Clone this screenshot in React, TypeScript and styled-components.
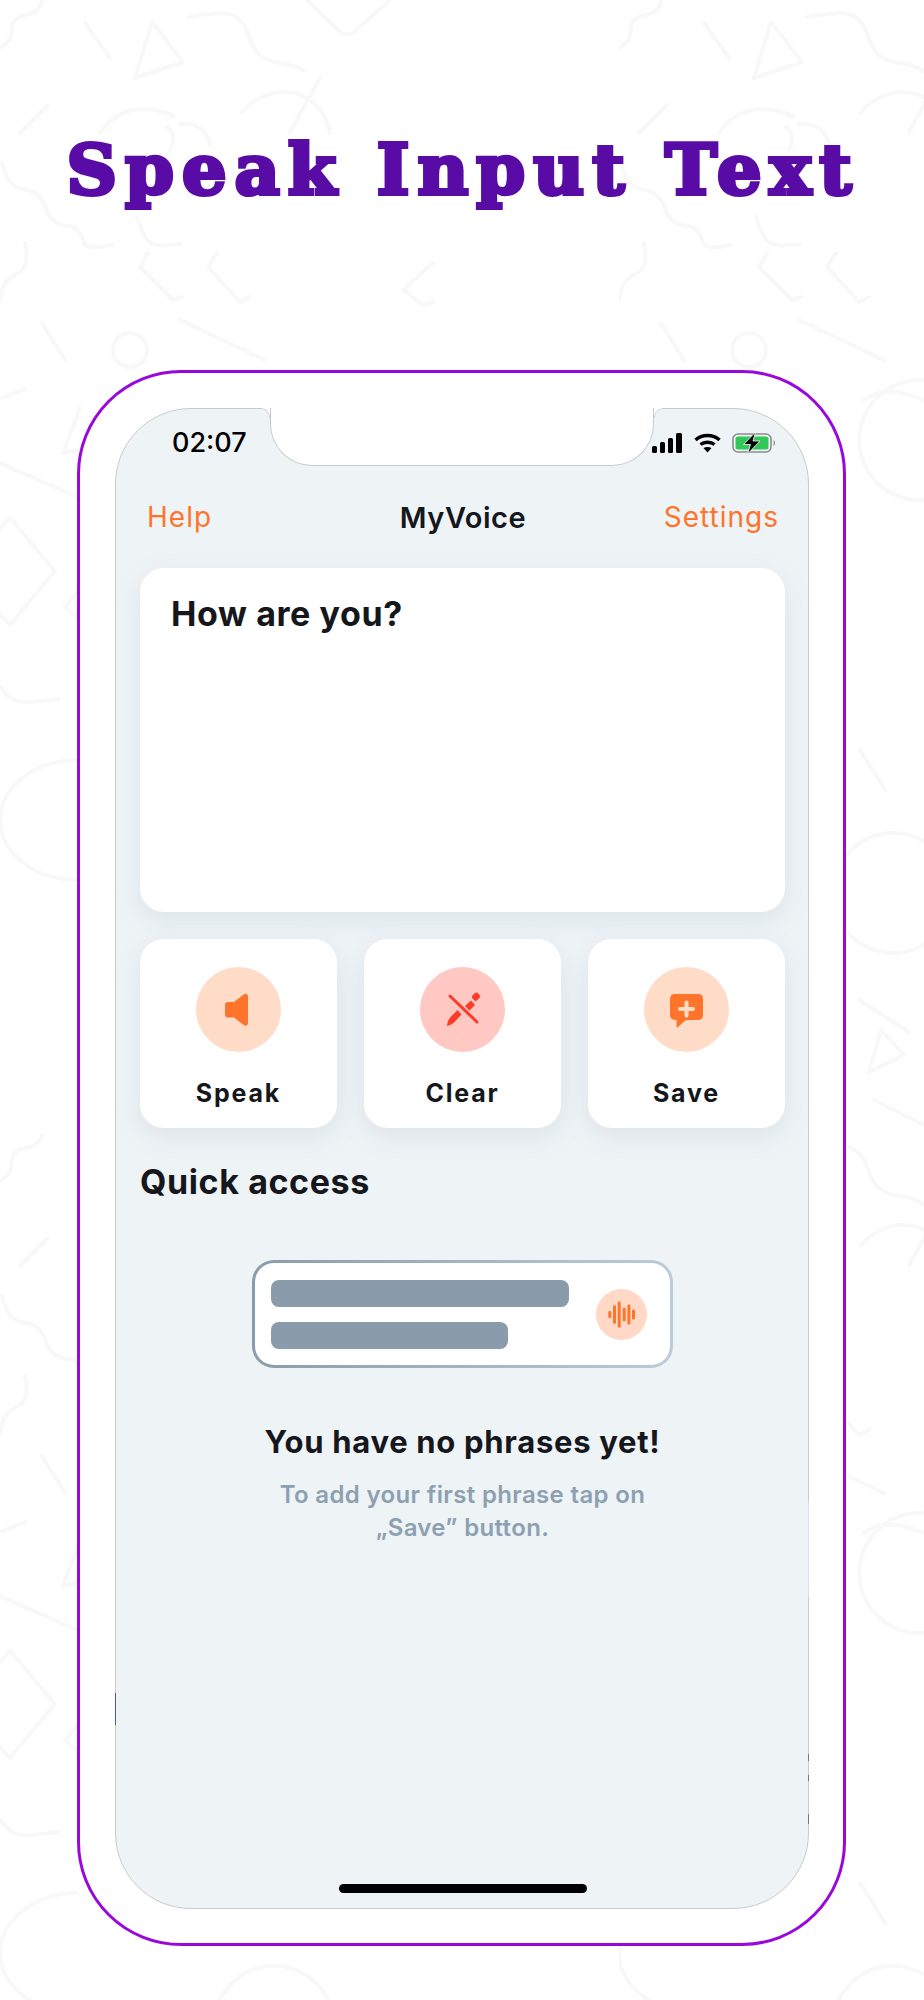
import React from 'react';
import styled, { createGlobalStyle } from 'styled-components';

const GlobalStyle = createGlobalStyle`
  html, body {
    margin: 0;
    padding: 0;
    background: #ffffff;
  }
  * {
    box-sizing: border-box;
  }
`;

const Page = styled.div`
  position: relative;
  width: 924px;
  height: 2000px;
  overflow: hidden;
  background: #ffffff;
  font-family: Inter, 'Noto Sans', sans-serif;
  color: #15171c;
`;

const Doodles = styled.svg`
  position: absolute;
  inset: 0;
  width: 924px;
  height: 2000px;
`;

const Title = styled.h1`
  position: relative;
  margin: 0;
  padding: 120px 0 0 2px;
  height: 370px;
  text-align: center;
  font-family: 'DejaVu Serif', serif;
  font-weight: 700;
  font-size: 70px;
  line-height: 100px;
  letter-spacing: 8px;
  color: #590ba6;
  -webkit-text-stroke: 4px #590ba6;
  white-space: nowrap;
`;

const Frame = styled.div`
  position: relative;
  width: 769px;
  height: 1576px;
  margin-left: 77px;
  padding: 35px;
  background: #ffffff;
  border: 3px solid #9a07dc;
  border-radius: 104px;
`;

const Screen = styled.div`
  position: relative;
  width: 694px;
  height: 1501px;
  display: flex;
  flex-direction: column;
  padding: 0 23px 15px 24px;
  background: #eef3f6;
  border: 1px solid #c6cbcc;
  border-radius: 76px;
`;

const Notch = styled.div`
  position: absolute;
  top: -1px;
  left: 154px;
  width: 384px;
  height: 58px;
  background: #ffffff;
  border: 1px solid #c6cbcc;
  border-top: none;
  border-radius: 0 0 42px 42px;

  &::before,
  &::after {
    content: '';
    position: absolute;
    top: 0;
    width: 10px;
    height: 10px;
  }
  &::before {
    left: -11px;
    background: radial-gradient(circle at 0 100%, transparent 9px, #c6cbcc 9.5px, #ffffff 10.5px);
  }
  &::after {
    right: -11px;
    background: radial-gradient(circle at 100% 100%, transparent 9px, #c6cbcc 9.5px, #ffffff 10.5px);
  }
`;

const EdgeMark = styled.span<{ $side: 'left' | 'right'; $top: number; $height: number; $color: string }>`
  position: absolute;
  ${(p) => p.$side}: -1px;
  top: ${(p) => p.$top}px;
  width: 1px;
  height: ${(p) => p.$height}px;
  background: ${(p) => p.$color};
`;

const StatusBar = styled.div`
  position: relative;
  height: 57px;
  display: flex;
  align-items: flex-start;
  justify-content: space-between;
  padding: 18px 9px 0 32px;
`;

const Time = styled.span`
  font-size: 27px;
  line-height: 32px;
  font-weight: 500;
  color: #000000;
`;

const StatusIcons = styled.div`
  display: flex;
  align-items: center;
  gap: 11px;
  margin-top: 5px;
`;

const Nav = styled.div`
  height: 102px;
  display: grid;
  grid-template-columns: 1fr auto 1fr;
  align-items: center;
  padding: 0 6px 0 7px;
`;

const NavLink = styled.span<{ $end?: boolean }>`
  font-size: 28px;
  font-weight: 400;
  letter-spacing: 1px;
  color: #ff742b;
  text-align: ${(p) => (p.$end ? 'right' : 'left')};
`;

const NavTitle = styled.span`
  font-size: 29px;
  font-weight: 600;
  letter-spacing: 0.5px;
`;

const TextCard = styled.div`
  height: 344px;
  padding: 26px 31px;
  background: #ffffff;
  border-radius: 24px;
  box-shadow: 0 8px 26px rgba(110, 140, 160, 0.14);
  font-size: 34px;
  line-height: 40px;
  font-weight: 700;
  letter-spacing: 0.6px;
`;

const Actions = styled.div`
  display: grid;
  grid-template-columns: repeat(3, 197px);
  gap: 27px;
  margin-top: 27px;
`;

const ActionCard = styled.div`
  height: 189px;
  display: flex;
  flex-direction: column;
  align-items: center;
  padding-top: 28px;
  background: #ffffff;
  border-radius: 24px;
  box-shadow: 0 8px 26px rgba(110, 140, 160, 0.14);
`;

const IconCircle = styled.div<{ $color: string }>`
  width: 85px;
  height: 85px;
  border-radius: 50%;
  background: ${(p) => p.$color};

  svg {
    display: block;
  }
`;

const ActionLabel = styled.span`
  margin-top: 26px;
  font-size: 25px;
  line-height: 30px;
  font-weight: 700;
  letter-spacing: 1.8px;
`;

const SectionTitle = styled.h2`
  margin: 34px 0 0;
  font-size: 34px;
  line-height: 40px;
  font-weight: 700;
  letter-spacing: 0.6px;
`;

const Placeholder = styled.div`
  align-self: center;
  width: 421px;
  height: 108px;
  margin-top: 58px;
  display: flex;
  align-items: center;
  padding: 0 23px 0 16px;
  border: 3px solid transparent;
  border-radius: 22px;
  background:
    linear-gradient(#ffffff, #ffffff) padding-box,
    linear-gradient(90deg, #8a9cab, #bccbd8) border-box;
`;

const PlaceholderLines = styled.div`
  flex: 1;
  display: flex;
  flex-direction: column;
  gap: 15px;
`;

const PlaceholderLine = styled.div<{ $width: number }>`
  width: ${(p) => p.$width}px;
  height: 27px;
  border-radius: 8px;
  background: #8a9cab;
`;

const WaveCircle = styled.div`
  width: 51px;
  height: 51px;
  border-radius: 50%;
  background: #ffd9c6;

  svg {
    display: block;
  }
`;

const EmptyTitle = styled.h3`
  margin: 56px 0 0;
  text-align: center;
  font-size: 31px;
  line-height: 36px;
  font-weight: 700;
  letter-spacing: 0.7px;
`;

const EmptyText = styled.p`
  margin: 18px 0 0;
  text-align: center;
  font-size: 24px;
  line-height: 33px;
  font-weight: 600;
  letter-spacing: 0.35px;
  color: #8da0b2;
`;

const HomeBar = styled.div`
  align-self: center;
  width: 248px;
  height: 9px;
  margin-top: auto;
  border-radius: 5px;
  background: #000000;
`;

const SignalIcon = () => (
  <svg width="31" height="20" viewBox="0 0 31 20" fill="#000">
    <rect x="0" y="13" width="5" height="7" rx="1.5" />
    <rect x="8" y="9" width="5" height="11" rx="1.5" />
    <rect x="16" y="5" width="5" height="15" rx="1.5" />
    <rect x="24" y="0" width="6" height="20" rx="1.5" />
  </svg>
);

const WifiIcon = () => (
  <svg width="27" height="20" viewBox="0 0 27 20" fill="none" stroke="#000" strokeWidth="3.4">
    <path d="M1.5 7 C8 1 19 1 25.5 7" />
    <path d="M6.5 11.5 C10 8.5 17 8.5 20.5 11.5" />
    <path d="M9.5 15 L13.5 19.5 L17.5 15 C15 13.5 12 13.5 9.5 15Z" fill="#000" stroke="none" />
  </svg>
);

const BatteryIcon = () => (
  <svg width="44" height="22" viewBox="0 0 44 22">
    <rect x="1" y="2" width="38" height="18" rx="5" fill="none" stroke="#8b8d8c" strokeWidth="1.6" />
    <rect x="3.5" y="4.5" width="33" height="13" rx="2.5" fill="#33c759" />
    <path d="M41.5 8 c2 .6 2 5.4 0 6z" fill="#9a9c9b" />
    <path d="M23.5 0 L11.5 12.5 H18.5 L15.5 22 L28 9 H21z" fill="#000" stroke="#ffffff" strokeWidth="0.8" />
  </svg>
);

const SpeakerIcon = () => (
  <svg width="85" height="85" viewBox="0 0 85 85">
    <path
      d="M32 35 h6 l9.5 -7.6 q4.5 -2 4.5 2.6 v25.5 q0 4.5 -4.5 2.6 l-9.5 -7.6 h-6 q-3 0 -3 -3 v-9.5 q0 -3 3 -3z"
      fill="#ff742b"
    />
  </svg>
);

const PencilCrossIcon = () => (
  <svg width="85" height="85" viewBox="0 0 85 85">
    <path d="M30 29 L57 55" stroke="#ff3b28" strokeWidth="3" strokeLinecap="round" />
    <path d="M27 59 Q27.5 53 31 49.5 L37.5 43 L41.5 47.5 L35.5 54 Q32 58 27 59z" fill="#ff3b28" />
    <path d="M45 39 L51 33.5 L55 38 L49.5 43.5z" fill="#ff3b28" />
    <rect x="52.5" y="26.5" width="7.5" height="6.5" rx="2" transform="rotate(-45 56 30)" fill="#ff3b28" />
  </svg>
);

const ChatPlusIcon = () => (
  <svg width="85" height="85" viewBox="0 0 85 85">
    <path
      d="M31 27 h23 q5 0 5 5 v16 q0 5 -5 5 h-12 l-8 7 q-1.500 1 -1.500 -1 v-6 q-6.500 0 -6.500 -5 v-16 q0 -5 5 -5z"
      fill="#ff742b"
    />
    <path d="M42.500 35.500 v13 M36 42 h13" stroke="#ffdcc8" strokeWidth="4" strokeLinecap="round" />
  </svg>
);

const waveBars = [
  { x: 12.3, h: 7 },
  { x: 17, h: 18.500 },
  { x: 21.700, h: 26 },
  { x: 26.700, h: 13.500 },
  { x: 31.400, h: 20 },
  { x: 36, h: 10 },
];

const WaveIcon = () => (
  <svg width="51" height="51" viewBox="0 0 51 51" fill="#ff742b">
    {waveBars.map((bar) => (
      <rect key={bar.x} x={bar.x} y={25.500 - bar.h / 2} width="3" height={bar.h} rx="1.200" />
    ))}
  </svg>
);

// one tile of the faint background pattern, repeats every 619 x 1133
const doodleTile = [
  'M0 48 c10 -6 12 -12 12 -20 c0 -10 10 -12 18 -14 c8 -3 12 -7 12 -14',
  'M85 23 L110 58',
  'M152 22 L183 62 L135 78z',
  'M188 17 c14 -2 24 -4 34 -4 c16 0 24 12 28 26 c4 14 14 22 30 24 c10 1 18 4 24 8',
  'M307 0 L340 32 q7 5 14 0 L390 0',
  'M20 133 L48 105',
  'M100 133 c10 -16 28 -24 42 -24 c14 0 24 3 32 8',
  'M242 112 c10 -12 26 -20 42 -20 c24 0 42 18 46 41',
  'M290 132 L320 78',
  'M170 150 c10 -20 -8 -26 -2 -22 M180 124 c16 -2 26 6 30 20',
  'M2 163 c4 14 8 24 20 26 c14 2 20 8 24 20 c4 12 12 16 22 17 c10 1 14 8 16 17 c2 4 8 6 28 2',
  'M25 243 c2 10 2 20 -2 26 c-6 8 -20 4 -23 32',
  'M137 217 c4 14 8 22 14 26 c8 4 18 2 30 1',
  'M148 253 L140 267 L173 300 L182 297',
  'M217 253 L208 267 L240 302 L250 297',
  'M433 263 L403 290 L423 305 L433 302',
  'M42 323 L65 360',
  'M113 350 a17 17 0 1 0 34 0 a17 17 0 1 0 -34 0',
  'M180 320 L265 360',
  'M2 398 L25 389',
  'M80 408 L63 453 L77 450',
  'M0 463 L77 497',
  'M-40 571 L10 518 L55 571 L10 625z',
  'M77 593 L65 607 L77 618',
  'M0 687 c8 10 14 15 26 15 c12 0 22 -2 32 -3',
  'M77 760 c-40 0 -77 26 -77 60 c0 34 37 60 77 60',
  'M245 400 c20 -14 40 -8 60 0',
  'M300 380 a60 60 0 1 0 0.500 0',
  'M241 750 L266 790',
  'M214 893 a60 60 0 1 0 120 0 a60 60 0 1 0 -120 0',
  'M240 1000 L290 1032',
  'M262 1030 L250 1072 L285 1055z',
  'M255 1100 L305 1125',
];

const App = () => {
  return (
    <Page>
      <GlobalStyle />
      <Doodles viewBox="0 0 924 2000">
        <defs>
          <pattern id="doodles" width="619" height="1133" patternUnits="userSpaceOnUse">
            <g fill="none" stroke="#f8f8f8" strokeWidth="4" strokeLinecap="round" strokeLinejoin="round">
              {doodleTile.map((d) => (
                <path key={d} d={d} />
              ))}
            </g>
          </pattern>
        </defs>
        <rect width="924" height="2000" fill="url(#doodles)" />
      </Doodles>
      <Title>Speak Input Text</Title>
      <Frame>
        <Screen>
          <StatusBar>
            <Time>02:07</Time>
            <StatusIcons>
              <SignalIcon />
              <WifiIcon />
              <BatteryIcon />
            </StatusIcons>
          </StatusBar>
          <Nav>
            <NavLink>Help</NavLink>
            <NavTitle>MyVoice</NavTitle>
            <NavLink $end>Settings</NavLink>
          </Nav>
          <TextCard>How are you?</TextCard>
          <Actions>
            <ActionCard>
              <IconCircle $color="#ffdcc8">
                <SpeakerIcon />
              </IconCircle>
              <ActionLabel>Speak</ActionLabel>
            </ActionCard>
            <ActionCard>
              <IconCircle $color="#ffc8c2">
                <PencilCrossIcon />
              </IconCircle>
              <ActionLabel>Clear</ActionLabel>
            </ActionCard>
            <ActionCard>
              <IconCircle $color="#ffdcc8">
                <ChatPlusIcon />
              </IconCircle>
              <ActionLabel>Save</ActionLabel>
            </ActionCard>
          </Actions>
          <SectionTitle>Quick access</SectionTitle>
          <Placeholder>
            <PlaceholderLines>
              <PlaceholderLine $width={298} />
              <PlaceholderLine $width={237} />
            </PlaceholderLines>
            <WaveCircle>
              <WaveIcon />
            </WaveCircle>
          </Placeholder>
          <EmptyTitle>You have no phrases yet!</EmptyTitle>
          <EmptyText>
            To add your first phrase tap on
            <br />
            „Save” button.
          </EmptyText>
          <HomeBar />
          <Notch />
          <EdgeMark $side="left" $top={1284} $height={32} $color="#4a5fa8" />
          <EdgeMark $side="right" $top={1092} $height={96} $color="#e6d8ee" />
          <EdgeMark $side="right" $top={1345} $height={7} $color="#777777" />
          <EdgeMark $side="right" $top={1366} $height={6} $color="#777777" />
          <EdgeMark $side="right" $top={1405} $height={10} $color="#777777" />
        </Screen>
      </Frame>
    </Page>
  );
};

export default App;
